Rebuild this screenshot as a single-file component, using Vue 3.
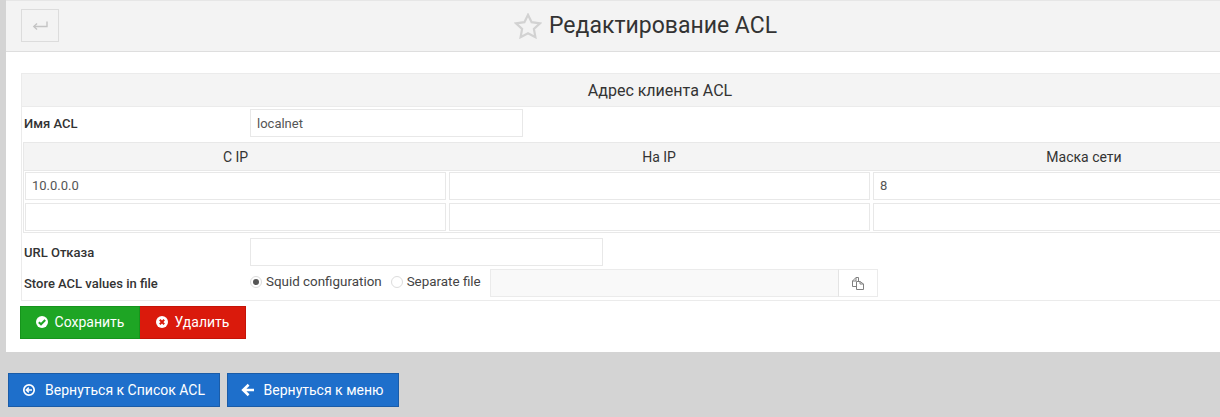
<script setup>
const cols = ['С IP', 'На IP', 'Маска сети']
const rows = [['10.0.0.0', '', '8'], ['', '', '']]
</script>

<template>
  <div class="page">
    <section class="panel">
      <header class="head">
        <button class="back" type="button" aria-label="Назад">
          <svg width="16" height="12" viewBox="0 0 16 12" fill="none" stroke="#c4c4c4" stroke-width="1.4">
            <path d="M15 1.5V6.5H2" />
            <path d="M5 3.5L1.8 6.5L5 9.5" />
          </svg>
        </button>
        <h1 class="title">
          <svg class="star" width="28" height="26" viewBox="0 0 28 26" fill="none" stroke="#d2d2d2" stroke-width="2.2" stroke-linejoin="miter">
            <path d="M14 1.8L17.6 9.2L26 10.3L19.9 16L21.4 24.2L14 20.3L6.6 24.2L8.1 16L2 10.3L10.4 9.2Z" />
          </svg>
          Редактирование ACL
        </h1>
      </header>

      <div class="body">
        <div class="form">
          <div class="form-title">Адрес клиента ACL</div>
          <div class="row row-name">
            <label class="label">Имя ACL</label>
            <input class="input name" value="localnet" />
          </div>
          <div class="ip-table">
            <div class="ip-head">
              <div v-for="c in cols" :key="c" class="ip-th">{{ c }}</div>
            </div>
            <div v-for="(r, i) in rows" :key="i" class="ip-row">
              <input v-for="(v, j) in r" :key="j" class="input ip" :value="v" />
            </div>
          </div>
          <div class="row row-url">
            <label class="label">URL Отказа</label>
            <input class="input url" />
          </div>
          <div class="row row-store">
            <label class="label store-label">Store ACL values in file</label>
            <div class="radios">
              <span class="radio on"></span><span class="radio-text first">Squid configuration</span>
              <span class="radio"></span><span class="radio-text">Separate file</span>
            </div>
            <div class="file">
              <div class="file-input"></div>
              <button class="file-btn" type="button" aria-label="Выбрать файл">
                <svg width="12" height="13" viewBox="0 0 12 13" fill="none" stroke="#808080" stroke-width="1">
                  <path d="M4.5 9.5H.5V4L4 .5H6.5V4" />
                  <path d="M4 .5V4H.5" />
                  <path d="M4.5 4.5H8L11.5 7V12.5H4.5Z" />
                  <path d="M8 4.5V7H11.5" />
                </svg>
              </button>
            </div>
          </div>
        </div>

        <div class="actions">
          <button class="btn green" type="button">
            <svg class="ico" width="14" height="14" viewBox="0 0 14 14">
              <circle cx="7" cy="7" r="6" fill="#fff" />
              <path d="M3.8 7.2L6 9.3L10.2 5" fill="none" stroke="#1ea524" stroke-width="2" />
            </svg>
            Сохранить
          </button>
          <button class="btn red" type="button">
            <svg class="ico" width="14" height="14" viewBox="0 0 14 14">
              <circle cx="7" cy="7" r="6" fill="#fff" />
              <path d="M4.8 4.8L9.2 9.2M9.2 4.8L4.8 9.2" fill="none" stroke="#da1a0c" stroke-width="2" />
            </svg>
            Удалить
          </button>
        </div>
      </div>
    </section>

    <nav class="footer">
      <button class="btn blue list" type="button">
        <svg width="14" height="14" viewBox="0 0 14 14" fill="none" stroke="#fff">
          <circle cx="7" cy="7" r="5.2" stroke-width="1.7" />
          <path d="M10 7H4.5M6.8 4.6L4.4 7L6.8 9.4" stroke-width="1.5" />
        </svg>
        Вернуться к Список ACL
      </button>
      <button class="btn blue menu" type="button">
        <svg width="14" height="14" viewBox="0 0 14 14" fill="none" stroke="#fff" stroke-width="2.6">
          <path d="M13 7H3M7.6 1.8L2.2 7L7.6 12.2" />
        </svg>
        Вернуться к меню
      </button>
    </nav>
  </div>
</template>

<style>
html, body { margin: 0; background: #d4d4d4; overflow: hidden; }
</style>

<style scoped>
.page {
  width: 1220px;
  height: 417px;
  overflow: hidden;
  background: #d4d4d4;
  font-family: Roboto, "Liberation Sans", sans-serif;
  font-size: 13px;
  color: #333;
}
.panel {
  width: 1300px;
  height: 352px;
  margin-left: 6px;
  background: #fff;
  box-sizing: border-box;
}
.head {
  height: 52px;
  box-sizing: border-box;
  background: #f3f3f3;
  border-top: 1px solid #e6e6e6;
  border-bottom: 1px solid #dedede;
  padding: 8px 15px;
  display: flex;
  position: relative;
}
.back {
  width: 38px;
  height: 33px;
  box-sizing: border-box;
  background: #f3f3f3;
  border: 1px solid #dcdcdc;
  padding: 0;
  display: flex;
  align-items: center;
  justify-content: center;
}
.title {
  position: absolute;
  left: 508px;
  top: 9px;
  margin: 0;
  display: flex;
  align-items: center;
  gap: 7px;
  font-size: 23px;
  font-weight: 400;
  line-height: 32px;
  white-space: nowrap;
}
.body { padding: 21px 0 0 14px; }
.form {
  width: 1278px;
  margin-left: 1px;
  box-sizing: border-box;
  border: 1px solid #ebebeb;
  border-top: 0;
  height: 228px;
}
.form-title {
  height: 34px;
  box-sizing: border-box;
  margin: 0 -1px;
  background: #f4f4f4;
  border: 1px solid #ebebeb;
  text-align: center;
  font-size: 16px;
  line-height: 33px;
}
.row { display: flex; }
.label {
  width: 226px;
  margin-left: 2px;
  flex: none;
  font-weight: 500;
  font-size: 13px;
}
.input {
  box-sizing: border-box;
  height: 28px;
  border: 1px solid #e8e8e8;
  background: #fff;
  padding: 0 6px;
  margin: 0;
  font: 13px Roboto, "Liberation Sans", sans-serif;
  color: #555;
  outline: 0;
  border-radius: 0;
}
.row-name { margin-top: 1px; align-items: center; height: 30px; }
.name { width: 273px; }
.ip-table {
  margin: 4px 0 0 1px;
  width: 1276px;
  box-sizing: border-box;
  border: 1px solid #e8e8e8;
  height: 91px;
}
.ip-head {
  display: grid;
  grid-template-columns: 423px 424px 426px;
  height: 28px;
  background: #f4f4f4;
  border-bottom: 1px solid #e8e8e8;
  box-sizing: border-box;
}
.ip-th {
  text-align: center;
  font-size: 14px;
  line-height: 29px;
}
.ip-row {
  display: grid;
  grid-template-columns: repeat(3, 421px);
  column-gap: 3px;
  padding: 1px 0 2px 1px;
}
.ip { width: 100%; padding-bottom: 2px; }
.row-url { margin-top: 5px; height: 28px; align-items: center; }
.url { width: 353px; }
.row-store { margin-top: 3px; height: 28px; }
.store-label { line-height: 29px; }
.radios {
  display: flex;
  align-items: center;
  height: 25px;
  width: 240px;
  flex: none;
}
.radio {
  box-sizing: border-box;
  width: 12px;
  height: 12px;
  border-radius: 50%;
  border: 1px solid #dcdcdc;
  background: #fff;
  position: relative;
  flex: none;
  margin-right: 4px;
}
.radio.on::after {
  content: "";
  position: absolute;
  left: 2px;
  top: 2px;
  width: 6px;
  height: 6px;
  border-radius: 50%;
  background: #555;
}
.radio-text { font-size: 13.4px; color: #444; }
.radio-text.first { margin-right: 9px; }
.file { display: flex; height: 28px; }
.file-input {
  width: 349px;
  box-sizing: border-box;
  background: #f9f9f9;
  border: 1px solid #ebebeb;
}
.file-btn {
  width: 40px;
  box-sizing: border-box;
  padding: 0;
  background: #fff;
  border: 1px solid #ebebeb;
  border-left-color: #e4e4e4;
  margin-left: -1px;
  display: flex;
  align-items: center;
  justify-content: center;
}
.actions { display: flex; margin-top: 5px; }
.actions .btn { padding-bottom: 2px; }
.ico { margin-left: -1px; margin-right: 1px; }
.btn {
  box-sizing: border-box;
  display: inline-flex;
  align-items: center;
  justify-content: center;
  gap: 5px;
  font: 14px Roboto, "Liberation Sans", sans-serif;
  color: #fff;
  padding: 0;
  border-radius: 0;
}
.green { width: 120px; height: 33px; background: #1ea524; border: 1px solid #16941c; }
.red { width: 106px; height: 33px; background: #da1a0c; border: 1px solid #c51307; border-left: 0; }
.footer {
  display: flex;
  gap: 7px;
  padding: 21px 0 0 8px;
}
.blue { height: 34px; background: #1e6fcb; border: 1px solid #1a5ca8; gap: 9px; }
.list { width: 212px; padding-right: 1px; }
.menu { width: 172px; padding-right: 2px; }
</style>
